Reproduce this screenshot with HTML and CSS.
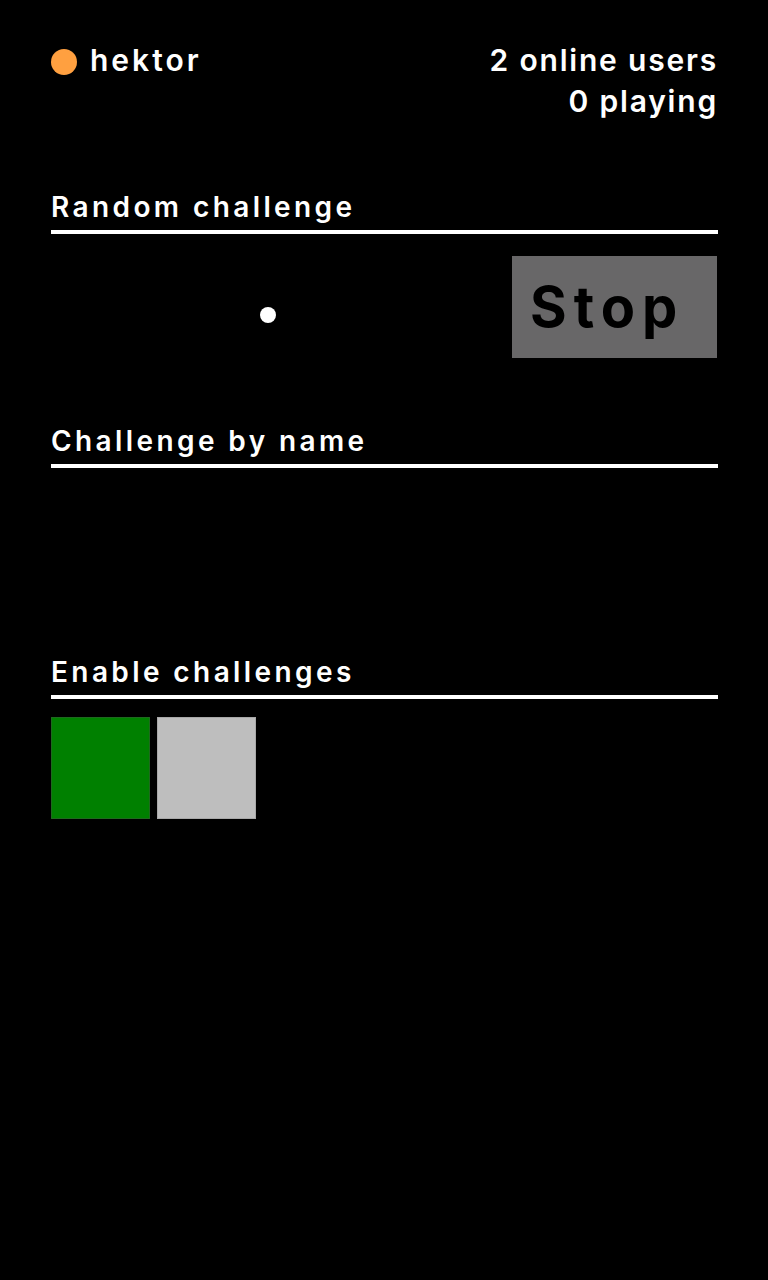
FILE: index.html
```html
<!DOCTYPE html>
<html lang="en">
<head>
<meta charset="utf-8">
<title>Lobby</title>
<link rel="stylesheet" href="styles.css">
</head>
<body>
<div class="page">
  <header class="top">
    <div class="user">
      <span class="status-dot"></span>
      <span class="user-name">hektor</span>
    </div>
    <div class="stats">
      <div>2 online users</div>
      <div>0 playing</div>
    </div>
  </header>

  <section class="section section-random">
    <h2 class="section-title">Random challenge</h2>
    <div class="random-row">
      <div class="spinner"><span class="spinner-dot"></span></div>
      <button class="stop-btn" type="button">Stop</button>
    </div>
  </section>

  <section class="section section-name">
    <h2 class="section-title">Challenge by name</h2>
    <div class="name-body"></div>
  </section>

  <section class="section section-enable">
    <h2 class="section-title">Enable challenges</h2>
    <div class="toggle">
      <span class="toggle-box toggle-on"></span>
      <span class="toggle-box toggle-off"></span>
    </div>
  </section>
</div>
</body>
</html>
```

FILE: styles.css
```css
html, body {
  margin: 0;
  padding: 0;
  background: #000;
}

body {
  color: #fff;
  font-family: "Inter", "Open Sans", sans-serif;
  font-weight: 600;
}

.page {
  padding: 0 50px 0 51px;
}

.top {
  display: flex;
  justify-content: space-between;
  align-items: flex-start;
  padding-top: 40px;
  font-size: 30px;
  line-height: 41px;
  letter-spacing: 1.8px;
}

.user {
  display: flex;
  align-items: center;
  gap: 13px;
}

.user-name {
  letter-spacing: 3px;
}

.status-dot {
  width: 26px;
  height: 26px;
  border-radius: 50%;
  background: #ffa040;
  margin-top: 2px;
}

.stats {
  text-align: right;
}

.section-title {
  margin: 0;
  font-size: 28px;
  line-height: 34px;
  font-weight: 600;
  letter-spacing: 3.4px;
  padding-bottom: 6px;
  border-bottom: 4px solid #fff;
}

.section-random {
  margin-top: 68px;
}

.random-row {
  display: flex;
  align-items: center;
  margin-top: 22px;
}

.spinner {
  flex: 1;
  display: flex;
  align-items: center;
  padding-left: 209px;
}

.spinner-dot {
  width: 16px;
  height: 16px;
  border-radius: 50%;
  background: #fff;
  margin-top: 16px;
}

.stop-btn {
  width: 205px;
  height: 102px;
  margin: 0 1px 0 0;
  padding: 0 0 0 18px;
  border: 0;
  background: #686768;
  color: #000;
  font-family: inherit;
  font-size: 56px;
  font-weight: 700;
  line-height: 102px;
  text-align: left;
  letter-spacing: 7px;
}

.section-name {
  margin-top: 66px;
}

.name-body {
  height: 120px;
}

.section-enable {
  margin-top: 67px;
}

.toggle {
  display: flex;
  gap: 7px;
  margin-top: 18px;
}

.toggle-box {
  width: 99px;
  height: 102px;
  box-sizing: border-box;
}

.toggle-on {
  background: #008000;
  border: 1px solid #1e6a1e;
}

.toggle-off {
  background: #bebebe;
  border: 1px solid #a8a8a8;
}
```
